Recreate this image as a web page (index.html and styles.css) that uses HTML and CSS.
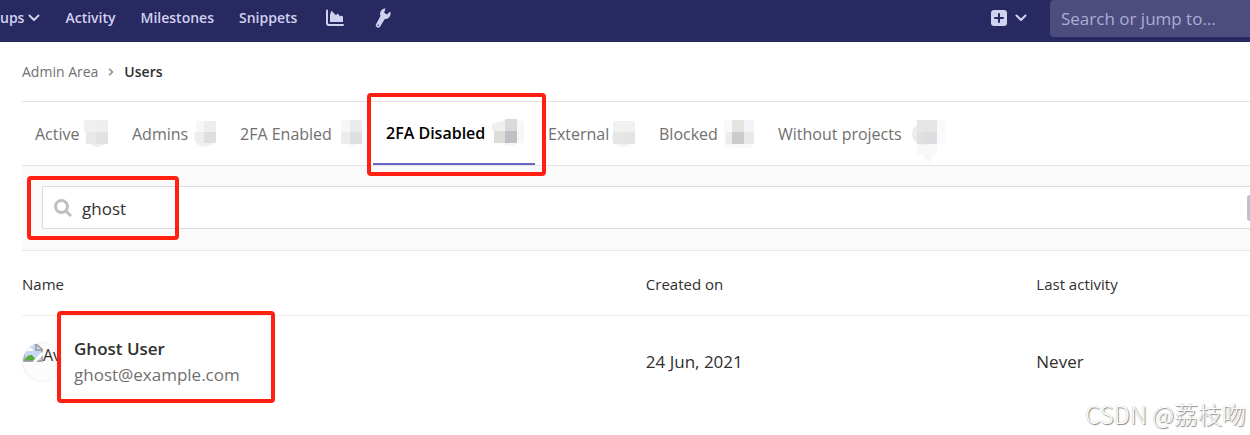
FILE: index.html
```html
<!DOCTYPE html>
<html lang="en">
<head>
<meta charset="utf-8">
<title>Users · Admin Area</title>
<link rel="stylesheet" href="styles.css">
</head>
<body>
<header class="navbar">
  <nav class="nav-links" aria-label="Main">
    <button class="nav-item nav-groups" type="button">ups
      <svg class="chevron" viewBox="0 0 12 12" aria-hidden="true"><path d="M1.5 3.5 6 8l4.500-4.500"/></svg>
    </button>
    <a class="nav-item" href="#">Activity</a>
    <a class="nav-item" href="#">Milestones</a>
    <a class="nav-item" href="#">Snippets</a>
    <a class="nav-item nav-chart" href="#" aria-label="Analytics">
      <svg class="nav-icon" viewBox="0 0 18 18"><path d="M0 1.500Q0 .5 1 .5t1 1V14q0 1 1 1h14q1 0 1 1t-1 1H3q-3 0-3-3z"/><path d="M4 13V6l1-3.500 1-.5 3 3.500 1 .5 2-1.500 2 3 1-1 2 1v5.500z"/></svg>
    </a>
    <a class="nav-item nav-wrench" href="#" aria-label="Admin Area">
      <svg class="nav-icon wrench-icon" viewBox="0 0 16 20"><path fill-rule="evenodd" d="M10.500.3A5.600 5.600 0 0 0 5.500 8L1.200 16a2.200 2.200 0 1 0 4 2.500L9.800 11a5.500 5.500 0 0 0 5.400-7.500l-3.300 3-2.700-1.700zM3.200 16.400a.8.8 0 1 1 0 1.600.8.8 0 0 1 0-1.600z"/></svg>
    </a>
  </nav>
  <button class="nav-item nav-new" type="button" aria-label="New">
    <svg class="plus-icon" viewBox="0 0 16 16"><rect class="plus-box" width="16" height="16" rx="3"/><path d="M8 4v8M4 8h8"/></svg>
    <svg class="chevron" viewBox="0 0 12 12" aria-hidden="true"><path d="M1.500 3.500 6 8l4.500-4.500"/></svg>
  </button>
  <input class="nav-search" type="text" placeholder="Search or jump to…" aria-label="Search or jump to">
</header>

<main class="content">
  <nav class="breadcrumb" aria-label="Breadcrumb">
    <a href="#">Admin Area</a>
    <svg class="crumb-arrow" viewBox="0 0 8 8" aria-hidden="true"><path d="M2 .8 5.500 4 2 7.200"/></svg>
    <a class="crumb-current" href="#">Users</a>
  </nav>

  <nav class="tabs" aria-label="User filters">
    <a class="tab" href="#">Active
      <svg class="count" viewBox="0 0 24 28"><ellipse cx="13" cy="18" rx="10" ry="9" fill="#f0f0f0"/><path fill="#f0f0f0" d="M0 0h12v12H0z"/><path fill="#eee" d="M12 0h12v12H12z"/><path fill="#e8e8e8" d="M2 12h10v12H2z"/><path fill="#e2e2e2" d="M12 12h12v12H12z"/></svg></a>
    <a class="tab" href="#">Admins
      <svg class="count" viewBox="0 0 24 28"><ellipse cx="13" cy="17" rx="11" ry="10" fill="#f1f1f1"/><path fill="#f7f7f7" d="M4 1h8v11H4z"/><path fill="#eee" d="M12 1h12v11H12z"/><path fill="#efedec" d="M4 12h8v11H4z"/><path fill="#dddee0" d="M12 12h12v11H12z"/></svg></a>
    <a class="tab" href="#">2FA Enabled
      <svg class="count" viewBox="0 0 24 28"><ellipse cx="15" cy="18" rx="8" ry="9" fill="#f8f8f8"/><path fill="#f6f7f6" d="M3 0h9v12H3z"/><path fill="#e9ecea" d="M12 0h12v12H12z"/><path fill="#ececeb" d="M3 12h9v12H3z"/><path fill="#dddfe1" d="M12 12h12v12H12z"/></svg></a>
    <a class="tab tab-active" href="#" aria-current="page">2FA Disabled
      <svg class="count count-wide" viewBox="0 0 32 28"><ellipse cx="17" cy="15" rx="14" ry="12" fill="#f6f6f6"/><path fill="#eeefef" d="M0 5l13-4v11H0z"/><path fill="#d7d9db" d="M13 0h12v12H13z"/><path fill="#dddcdb" d="M2 12h11v12H2z"/><path fill="#bfc0c5" d="M13 12h12v12H13z"/><path fill="#f7f7f7" d="M25 2h7v22h-7z"/></svg>
      <span class="marker marker-tab"></span></a>
    <a class="tab" href="#">External
      <svg class="count" viewBox="0 0 24 28"><ellipse cx="12" cy="17" rx="11" ry="10" fill="#f2f2f2"/><path fill="#f0f1f1" d="M2 1h22v11H2z"/><path fill="#e6e6e6" d="M2 12h12v12H2z"/><path fill="#e4e4e4" d="M14 12h10v12H14z"/></svg></a>
    <a class="tab" href="#">Blocked
      <svg class="count count-wide" viewBox="0 0 32 28"><path fill="#f9f9f9" d="M2 0h8v29H2zM10 24h19v4H10z"/><path fill="#e4e4e2" d="M10 0h12v12H10z"/><path fill="#f3f4f7" d="M22 0h10v12H22z"/><path fill="#ececec" d="M4 12h6v12H4z"/><path fill="#cbcbcb" d="M10 12h12v12H10z"/><path fill="#e9e9eb" d="M22 12h10v12H22z"/></svg></a>
    <a class="tab" href="#">Without projects
      <svg class="count count-wide" viewBox="0 0 32 28"><path fill="#f8f8f8" d="M3 22h20v12l-3 1-5 8-7-9H3z"/><ellipse cx="9" cy="14" rx="11" ry="11" fill="#ededed"/><path fill="#e6e6e6" d="M3 0h20v12H3z"/><path fill="#e0e0e0" d="M3 12h8v12H3z"/><path fill="#dcdde0" d="M11 12h12v12H11z"/><path fill="#fafafa" d="M23 0h9v24h-9z"/></svg></a>
  </nav>

  <form class="filter-bar" onsubmit="return false">
    <div class="filter-field">
      <svg class="search-icon" viewBox="0 0 18 18" aria-hidden="true"><circle cx="7.500" cy="7.500" r="6"/><path d="m12 12 5 5"/></svg>
      <input class="filter-input" type="text" value="ghost" aria-label="Search users">
      <button class="clear-button" type="button" aria-label="Clear search"></button>
    </div>
    <span class="marker marker-search"></span>
  </form>

  <table class="users">
    <thead>
      <tr><th class="col-name">Name</th><th class="col-created">Created on</th><th>Last activity</th></tr>
    </thead>
    <tbody>
      <tr>
        <td>
          <div class="user">
            <div class="avatar">
              <svg class="broken-image" viewBox="0 0 20 19" aria-hidden="true"><path fill="#c6d8f3" d="M0 0h13l6 6v13H0z"/><path fill="#fff" d="M3 8q0-2 2-2 1-2 3-1 2 0 2 3z"/><path fill="#57ad3b" d="M1 18q3-7 8-6l5 6z"/><path fill="none" stroke="#999" stroke-width="1.500" d="M1 0v18h18V6l-6-5H1M13 1v6h6"/><path stroke="#fff" stroke-width="3" d="m11 19 9-9"/></svg>
              <span>Av</span>
            </div>
            <div class="user-text">
              <a class="user-name" href="#">Ghost User</a>
              <a class="user-mail" href="#">ghost@example.com</a>
            </div>
            <span class="marker marker-user"></span>
          </div>
        </td>
        <td>24 Jun, 2021</td>
        <td>Never</td>
      </tr>
    </tbody>
  </table>
</main>
<div class="watermark">CSDN @荔枝吻</div>
</body>
</html>
```
FILE: styles.css
```css
* { box-sizing: border-box; }

body {
  margin: 0;
  background: #fff;
  color: #303030;
  font: 16px/24px "Open Sans", "Noto Sans", "Noto Sans CJK SC", sans-serif;
  overflow: hidden;
}

a { color: inherit; text-decoration: none; }
button { border: 0; padding: 0; background: none; color: inherit; font: inherit; }

.navbar {
  display: flex;
  height: 42px;
  padding-bottom: 5px;
  background: #292961;
  color: #d1d1f0;
}
.nav-links { display: flex; flex: 1; align-items: center; gap: 25px; padding-bottom: 2px; }
.nav-item { display: flex; align-items: center; font-size: 14px; font-weight: 600; }
.nav-groups { gap: 4px; }
.chevron { width: 12px; height: 12px; fill: none; stroke: currentColor; stroke-width: 2; stroke-linecap: round; stroke-linejoin: round; }
.nav-icon { width: 18px; height: 18px; fill: currentColor; }
.nav-chart { margin-left: 4px; }
.nav-wrench { margin-left: 6px; }
.wrench-icon { width: 16px; height: 20px; }
.nav-new { gap: 8px; margin-right: 23px; padding-bottom: 2px; }
.plus-icon { width: 16px; height: 16px; fill: currentColor; stroke: #292961; stroke-width: 2; stroke-linecap: round; }
.plus-box { stroke: none; }
.nav-search {
  width: 16%;
  border: 0;
  border-radius: 4px 0 0 4px;
  padding: 0 11px;
  background: #4c4c7d;
  color: #d1d1f0;
  font: 17px/24px "Open Sans", "Noto Sans", sans-serif;
}
.nav-search::placeholder { color: #acacd5; opacity: 1; }

.content { padding-left: 22px; }

.breadcrumb {
  display: flex;
  align-items: center;
  gap: 9px;
  height: 60px;
  border-bottom: 1px solid #e3e3e3;
  color: #707070;
  font-size: 14px;
}
.crumb-current { color: #303030; font-weight: 600; }
.crumb-arrow { width: 8px; height: 8px; fill: none; stroke: #888; stroke-width: 1.5; }

.tabs {
  display: grid;
  grid-template-columns: 97px 108px 146px 162px 111px 119px 192px;
  height: 64px;
  border-bottom: 1px solid #e3e3e3;
  color: #707070;
}
.tab {
  position: relative;
  display: flex;
  align-items: center;
  justify-content: space-between;
  padding: 0 11px 0 13px;
  white-space: nowrap;
}
.tab-active { border-bottom: 2px solid #6666c4; color: #000; font-weight: 600; }
.count { flex: none; width: 24px; height: 28px; overflow: visible; }
.count-wide { width: 32px; }

.filter-bar {
  position: relative;
  padding: 20px 0 21px 20px;
  border-bottom: 1px solid #e8e8e8;
  background: #fafafa;
}
.filter-field {
  display: flex;
  align-items: center;
  gap: 10px;
  height: 43px;
  padding-left: 11px;
  border: 1px solid #dbdbdb;
  border-right: 0;
  border-radius: 2px 0 0 2px;
  background: #fff;
}
.search-icon { width: 18px; height: 18px; fill: none; stroke: #bfbfbf; stroke-width: 3; }
.filter-input {
  flex: 1;
  min-width: 0;
  border: 0;
  padding: 2px 0 0;
  outline: 0;
  background: none;
  color: #303030;
  font: 17px/24px "Open Sans", "Noto Sans", sans-serif;
}
.clear-button { width: 3px; height: 26px; border-radius: 4px 0 0 4px; background: #bfc2ce; }

.users { width: 100%; border-collapse: collapse; table-layout: fixed; }
.users th { height: 64px; padding: 2px 0 0; border-bottom: 1px solid #eee; font-size: 15px; font-weight: 400; text-align: left; }
.users td { height: 94px; padding: 0; font-size: 17px; }
.col-name { width: 50.8%; }
.col-created { width: 31.8%; }

.user { position: relative; display: flex; align-items: center; gap: 12px; }
.avatar {
  display: flex;
  flex: none;
  width: 40px;
  height: 40px;
  border: 1px solid #f0f0f0;
  border-radius: 50%;
  background: #fcfcfc;
  font-size: 16px;
}
.broken-image { flex: none; width: 20px; height: 19px; border-top-left-radius: 20px; }
.user-text { display: flex; flex-direction: column; line-height: 26px; }
.user-name { font-weight: 600; }
.user-mail { color: #707070; }

.marker { position: absolute; z-index: 1; border: 4px solid #ff2012; border-radius: 4px; pointer-events: none; }
.marker-tab { inset: -9px -11px -13px -6px; }
.marker-search { top: 10px; left: 5px; width: 152px; height: 64px; }
.marker-user { top: -25px; left: 35px; width: 218px; height: 92px; }

.watermark {
  position: absolute;
  right: 4px;
  bottom: 5px;
  color: #fff;
  font: 300 24px/32px "Noto Sans CJK SC", sans-serif;
  text-shadow: 1px 1px 1px #888, 0 0 1px #aaa;
}
```
